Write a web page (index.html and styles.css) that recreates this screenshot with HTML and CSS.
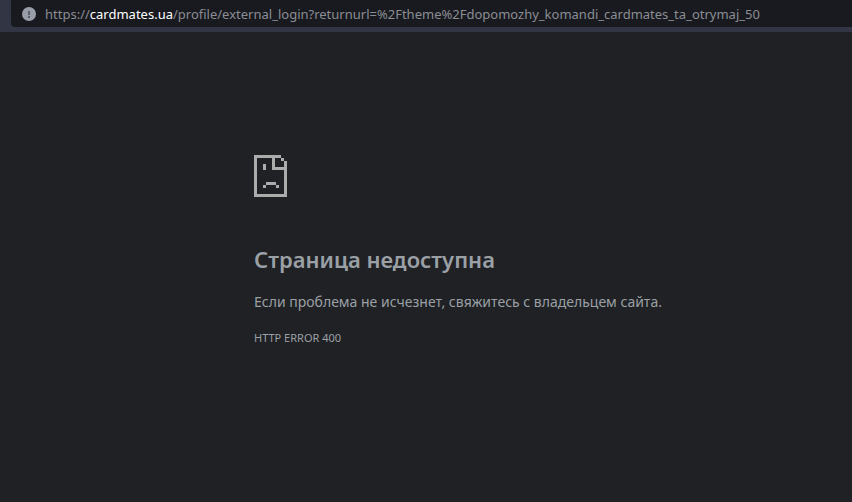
FILE: index.html
```html
<!DOCTYPE html>
<html lang="ru">
<head>
    <meta charset="UTF-8">
    <meta name="viewport" content="width=device-width, initial-scale=1.0">
    <title>cardmates.ua</title>
    <link rel="stylesheet" href="styles.css">
</head>
<body>
    <header class="toolbar">
        <div class="address-bar">
            <svg class="info-icon" viewBox="0 0 14 14" aria-hidden="true">
                <circle cx="7" cy="7" r="7" fill="#9a9ea8"/>
                <path d="M6 4h2v4H6zM6 9h2v2H6z" fill="#5c5f68"/>
            </svg>
            <a class="url" href="#">https://<span class="host">cardmates.ua</span>/profile/external_login?returnurl=%2Ftheme%2Fdopomozhy_komandi_cardmates_ta_otrymaj_50</a>
        </div>
    </header>

    <main class="error-page">
        <svg class="error-icon" viewBox="0 0 33 42" shape-rendering="crispEdges" aria-hidden="true">
            <path d="M0 0h27v3H3v36h27V15H18V3h3v9h9V6h3v36H0z"/>
            <path d="M27 3h3v3h-3zM9 9h3v6H9zM12 27h10v3H12zM9 30h3v3H9zM22 30h3v3h-3z"/>
        </svg>
        <h1>Страница недоступна</h1>
        <p>Если проблема не исчезнет, свяжитесь с владельцем сайта.</p>
        <div class="error-code">HTTP ERROR 400</div>
    </main>
</body>
</html>
```

FILE: styles.css
```css
body {
    margin: 0;
    background-color: #202124;
    color: #9aa0a6;
    font-family: "Segoe UI", "Noto Sans", sans-serif;
}

.toolbar {
    background-color: #323544;
    padding: 0 0 5px 11px;
}

.address-bar {
    display: flex;
    align-items: center;
    gap: 9px;
    height: 27px;
    padding-left: 11px;
    background-color: #181a20;
    border-radius: 0 0 0 4px;
}

.info-icon {
    flex: none;
    width: 14px;
    height: 14px;
}

.url {
    color: #8b8d93;
    font-size: 13px;
    line-height: 20px;
    text-decoration: none;
    white-space: nowrap;
}

.host {
    color: #ffffff;
}

.error-page {
    padding: 123px 16px 0 254px;
}

.error-icon {
    display: block;
    width: 33px;
    height: 42px;
    fill: #acacac;
}

h1 {
    margin: 47px 0 18px;
    font-size: 22px;
    font-weight: 600;
    line-height: 30px;
}

p {
    margin: 0 0 16px;
    font-size: 14px;
    line-height: 20px;
}

.error-code {
    font-size: 11px;
    line-height: 20px;
}
```
